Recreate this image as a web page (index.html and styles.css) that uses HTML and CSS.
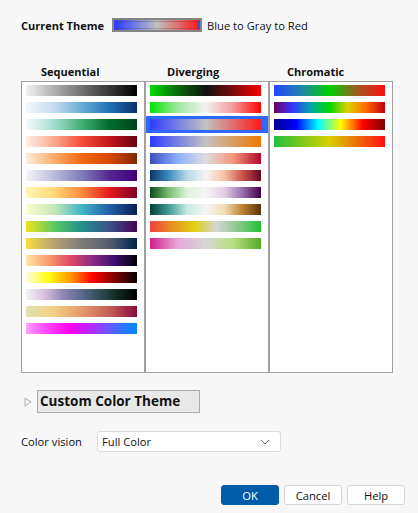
FILE: index.html
```html
<!DOCTYPE html>
<html lang="en">
<head>
    <meta charset="UTF-8">
    <meta name="viewport" content="width=device-width, initial-scale=1.0">
    <title>Color Themes</title>
    <link rel="stylesheet" href="styles.css">
</head>
<body>

    <div class="dialog">

        <!-- Current theme swatch -->
        <div class="current">
            <span class="current-label">Current Theme</span>
            <span class="swatch"><span class="swatch-inner g-bgr"></span></span>
            <span class="current-name">Blue to Gray to Red</span>
        </div>

        <!-- Theme lists -->
        <div class="themes">
            <div class="col">
                <div class="col-title">Sequential</div>
                <div class="col-list">
                    <div class="row"><span class="bar s1"></span></div>
                    <div class="row"><span class="bar s2"></span></div>
                    <div class="row"><span class="bar s3"></span></div>
                    <div class="row"><span class="bar s4"></span></div>
                    <div class="row"><span class="bar s5"></span></div>
                    <div class="row"><span class="bar s6"></span></div>
                    <div class="row"><span class="bar s7"></span></div>
                    <div class="row"><span class="bar s8"></span></div>
                    <div class="row"><span class="bar s9"></span></div>
                    <div class="row"><span class="bar s10"></span></div>
                    <div class="row"><span class="bar s11"></span></div>
                    <div class="row"><span class="bar s12"></span></div>
                    <div class="row"><span class="bar s13"></span></div>
                    <div class="row"><span class="bar s14"></span></div>
                    <div class="row"><span class="bar s15"></span></div>
                </div>
            </div>
            <div class="col">
                <div class="col-title">Diverging</div>
                <div class="col-list">
                    <div class="row"><span class="bar d1"></span></div>
                    <div class="row"><span class="bar d2"></span></div>
                    <div class="row selected"><span class="bar g-bgr"></span></div>
                    <div class="row"><span class="bar d4"></span></div>
                    <div class="row"><span class="bar d5"></span></div>
                    <div class="row"><span class="bar d6"></span></div>
                    <div class="row"><span class="bar d7"></span></div>
                    <div class="row"><span class="bar d8"></span></div>
                    <div class="row"><span class="bar d9"></span></div>
                    <div class="row"><span class="bar d10"></span></div>
                </div>
            </div>
            <div class="col">
                <div class="col-title">Chromatic</div>
                <div class="col-list">
                    <div class="row"><span class="bar c1"></span></div>
                    <div class="row"><span class="bar c2"></span></div>
                    <div class="row"><span class="bar c3"></span></div>
                    <div class="row"><span class="bar c4"></span></div>
                </div>
            </div>
        </div>

        <!-- Custom theme outline node -->
        <div class="custom">
            <svg class="disclosure" width="8" height="10" viewBox="0 0 8 10">
                <polygon points="1,1 7,5 1,9" fill="none" stroke="#a8a8a8" stroke-width="1"/>
            </svg>
            <span class="custom-title">Custom Color Theme</span>
        </div>

        <!-- Color vision -->
        <div class="vision">
            <label class="vision-label">Color vision</label>
            <div class="select">
                <span>Full Color</span>
                <svg width="10" height="6" viewBox="0 0 10 6">
                    <polyline points="1,1 5,5 9,1" fill="none" stroke="#6b6b6b" stroke-width="1"/>
                </svg>
            </div>
        </div>

        <!-- Buttons -->
        <div class="buttons">
            <button class="btn btn-primary">OK</button>
            <button class="btn">Cancel</button>
            <button class="btn">Help</button>
        </div>
    </div>

</body>
</html>
```

FILE: styles.css
```css
body {
    font-family: "Open Sans", "Noto Sans", sans-serif;
    font-size: 11.2px;
    color: #111;
    background-color: #f7f7f7;
    margin: 0;
    padding: 0;
}
.dialog {
    padding: 18px 0 0 21px;
}

/* current theme */
.current {
    display: flex;
    align-items: center;
    height: 14px;
}
.current-label {
    flex-shrink: 0;
    font-weight: bold;
    font-size: 11px;
    width: 91px;
}
.swatch {
    display: block;
    flex-shrink: 0;
    width: 86px;
    height: 10px;
    border: 2px solid #858585;
    background: linear-gradient(90deg, #2d3cff, #c2c2c2, #ff1a1a);
}
.swatch-inner {
    display: block;
    margin: 1px;
    height: 6px;
    border: 1px solid rgba(70, 70, 70, 0.3);
}
.current-name {
    margin-left: 5px;
}

/* theme columns */
.themes {
    display: grid;
    grid-template-columns: repeat(3, 124px);
    margin-top: 32px;
}
.col-title {
    font-weight: bold;
    font-size: 11px;
    height: 17px;
    line-height: 16px;
    padding-left: 20px;
}
.col-list {
    height: 290px;
    border: 1px solid #a0a0a0;
    background-color: white;
}
.col + .col .col-title {
    padding-left: 22px;
}
.col:last-child .col-title {
    padding-left: 18px;
}
.row {
    height: 17px;
    padding: 3px 0 0 4px;
    box-sizing: border-box;
}
.row.selected {
    background-color: #2d68f8;
}
.bar {
    display: block;
    width: 111px;
    height: 11px;
}

/* sequential */
.s1 { background: linear-gradient(90deg, #f2f2f2, #9a9a9a, #4a4a4a, #000); }
.s2 { background: linear-gradient(90deg, #f3f7fc, #c6dbef, #6baed6, #2171b5, #08306b); }
.s3 { background: linear-gradient(90deg, #f4fbfd, #a3ddd0, #41ae76, #006d2c, #00441b); }
.s4 { background: linear-gradient(90deg, #fdeee6, #fcab8f, #f44d38, #c5161c, #67000d); }
.s5 { background: linear-gradient(90deg, #fdeee0, #fdae6b, #f16913, #d94801, #7f2704); }
.s6 { background: linear-gradient(90deg, #f5f4f9, #bcbddc, #807dba, #54278f, #3f007d); }
.s7 { background: linear-gradient(90deg, #fff7b5, #fed976, #fd8d3c, #e31a1c, #800026); }
.s8 { background: linear-gradient(90deg, #fbfdd0, #c7e9b4, #41b6c4, #225ea8, #081d58); }
.s9 { background: linear-gradient(90deg, #f0e41c, #5ec962, #21918c, #3b528b, #440154); }
.s10 { background: linear-gradient(90deg, #f9dd40, #b6a471, #7c7b78, #575d6d, #00224e); }
.s11 { background: linear-gradient(90deg, #fde7a8, #fb9a6c, #de4968, #8c2981, #3b0f70, #000004); }
.s12 { background: linear-gradient(90deg, #fffbe0, #ffff10, #ff9800, #ff0000, #800000, #000); }
.s13 { background: linear-gradient(90deg, #f3f3f6, #d6c0dc, #8f86b4, #5c6a8e, #2f4d55, #10261e, #000); }
.s14 { background: linear-gradient(90deg, #dfe2b4, #f5cf82, #e5996a, #c45f58, #880a3a); }
.s15 { background: linear-gradient(90deg, #ffa0f8, #ff40ff, #f800f0, #b02cff, #4c68ff, #0088ff); }

/* diverging */
.g-bgr { background: linear-gradient(90deg, #2d3cff, #c2c2c2, #ff1a1a); }
.d1 { background: linear-gradient(90deg, #00dc00, #0b6a0b, #111, #7a0b0b, #ff0000); }
.d2 { background: linear-gradient(90deg, #00e400, #9fe79f, #f2f2f2, #f39a9a, #ff0000); }
.d4 { background: linear-gradient(90deg, #2d3cff, #c2c2c2, #f07800); }
.d5 { background: linear-gradient(90deg, #3b4cc0, #8db0fe, #dddddd, #f4987a, #b40426); }
.d6 { background: linear-gradient(90deg, #0b3567, #3a8bc0, #b5d8e8, #f5f5f5, #f6c3a8, #c9534a, #6a0421); }
.d7 { background: linear-gradient(90deg, #0b4a1c, #78bd6e, #e0f2da, #f5f5f5, #e3cfe4, #9670ab, #40004b); }
.d8 { background: linear-gradient(90deg, #004038, #3e9990, #c7eae5, #f5f5f5, #f1dfb5, #bd7f30, #5a3205); }
.d9 { background: linear-gradient(90deg, #f24040, #e89020, #e0d010, #d4d4d4, #86c886, #22c038); }
.d10 { background: linear-gradient(90deg, #d0208e, #e8a8d8, #d6d6d6, #b8e080, #55a82a); }

/* chromatic */
.c1 { background: linear-gradient(90deg, #2446ff, #1f85a8, #00d200, #a05a20, #ff1010); }
.c2 { background: linear-gradient(90deg, #700062, #3434ff, #00a8a8, #00d800, #e0d000, #ff6400, #c00010); }
.c3 { background: linear-gradient(90deg, #000090, #0000ff, #00ffff, #ffff00, #ff0000, #800000); }
.c4 { background: linear-gradient(90deg, #22c03a, #d8d000, #ff1010); }

/* custom theme node */
.custom {
    display: flex;
    align-items: center;
    margin-top: 17px;
}
.disclosure {
    margin-left: 3px;
    margin-right: 5px;
}
.custom-title {
    font-weight: bold;
    font-size: 13.5px;
    background-color: #e8e8e8;
    border: 1px solid #ababab;
    padding: 0 19px 0 2px;
    height: 21px;
    line-height: 21px;
}

/* color vision */
.vision {
    display: flex;
    align-items: center;
    margin-top: 18px;
}
.vision-label {
    width: 76px;
}
.select {
    display: flex;
    align-items: center;
    justify-content: space-between;
    width: 168px;
    height: 19px;
    padding: 0 10px 0 4px;
    background-color: white;
    border: 1px solid #dcdcdc;
    border-radius: 3px;
}

/* dialog buttons */
.buttons {
    display: flex;
    justify-content: flex-end;
    gap: 5px;
    margin-top: 33px;
    padding-right: 13px;
}
.btn {
    font-family: inherit;
    font-size: 11.2px;
    color: #111;
    width: 58px;
    height: 20px;
    padding: 0;
    background-color: white;
    border: 1px solid #d6d6d6;
    border-radius: 3px;
}
.btn-primary {
    background-color: #005ca8;
    border-color: #005ca8;
    color: white;
}
```
